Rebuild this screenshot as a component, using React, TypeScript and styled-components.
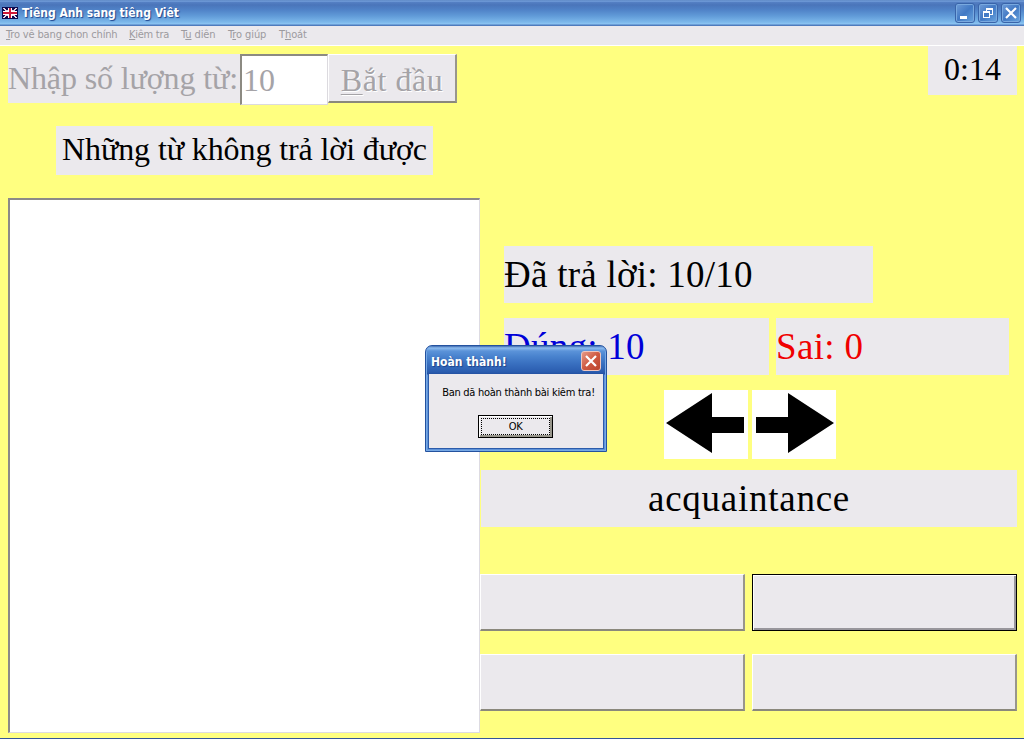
import React from 'react';
import styled, { createGlobalStyle, css } from 'styled-components';

const FACE = '#ebe9ed';
const YELLOW = '#ffff80';
const UI = '"DejaVu Sans Condensed", "Noto Sans", sans-serif';

const Global = createGlobalStyle`
  *, *::before, *::after { box-sizing: border-box; }
  body { margin: 0; overflow: hidden; font-family: "Liberation Serif", serif; }
  button, input { font: inherit; margin: 0; border-radius: 0; outline: none; }
`;

const Window = styled.div`
  position: relative;
  display: flex;
  flex-direction: column;
  width: 1024px;
  height: 739px;
  background: ${YELLOW};
  border-bottom: 1px solid #34559a;
  white-space: nowrap;
`;

const TitleBar = styled.header`
  display: flex;
  align-items: center;
  height: 26px;
  flex: none;
  padding: 0 3px 0 2px;
  background: linear-gradient(#4a74b4 0, #7fabe4 1px, #5580c4 2px, #4a75ba 5px, #5083c8 10px, #619bd8 16px, #7bb7ea 22px, #8cc4f2 24px, #4e7bbd 25px);
  color: #fff;
`;

const Title = styled.h1<{ $spacing: number }>`
  flex: 1;
  margin: 0;
  font: bold 12px/16px ${UI};
  letter-spacing: ${(p) => p.$spacing}px;
  text-shadow: 1px 1px 1px #1d438c;
`;

const Flag = styled.svg`
  width: 16px;
  height: 12px;
  margin-right: 4px;
`;

const WindowButtons = styled.div`
  display: flex;
  gap: 3px;
`;

const WindowButton = styled.button`
  display: grid;
  place-items: center;
  width: 20px;
  height: 20px;
  padding: 0;
  border: 1px solid #3964a9;
  border-radius: 3px;
  background: linear-gradient(135deg, #6f9cd8, #4279c4 50%, #69a5df);
  box-shadow: inset 0 0 0 1px #79a9df;
`;

const MenuBar = styled.nav`
  display: flex;
  flex: none;
  height: 20px;
  padding-left: 6px;
  background: ${FACE};
  border-bottom: 1px solid #fff;
  font: 11px/18px ${UI};
  color: #9c9a9e;
`;

const MenuItem = styled.span<{ $width: number; $spacing: number }>`
  width: ${(p) => p.$width}px;
  letter-spacing: ${(p) => p.$spacing}px;
`;

const Main = styled.main`
  display: flex;
  flex: 1;
`;

const LeftColumn = styled.section`
  width: 480px;
  padding: 8px 0 0 8px;
`;

const CountRow = styled.div`
  display: flex;
  align-items: flex-start;
  font-size: 32px;
  color: #a5a3a7;
`;

const Plate = styled.div<{ $w?: number; $h: number; $line?: number; $size: number; $color?: string; $center?: boolean; $spacing?: number }>`
  width: ${(p) => (p.$w ? `${p.$w}px` : 'auto')};
  height: ${(p) => p.$h}px;
  background: ${FACE};
  color: ${(p) => p.$color || '#000'};
  font-size: ${(p) => p.$size}px;
  line-height: ${(p) => p.$line || p.$h}px;
  letter-spacing: ${(p) => p.$spacing || 0}px;
  text-align: ${(p) => (p.$center ? 'center' : 'left')};
`;

const CountInput = styled.input`
  width: 88px;
  height: 51px;
  padding: 0 1px 0;
  border: solid;
  border-width: 2px 1px 1px 2px;
  border-color: #8c8a82 #dcdadf #dcdadf #8c8a82;
  background: #fff;
  color: #a5a3a7;
`;

const raised = css`
  border: solid;
  border-width: 1px 2px 2px 1px;
  border-color: #fff #98968c #8a887c #fff;
  background: ${FACE};
`;

const StartButton = styled.button`
  ${raised}
  width: 129px;
  height: 49px;
  padding: 4px 0 0;
  line-height: 36px;
  letter-spacing: 0.55px;
  color: #a5a3a7;
  text-shadow: 1px 1px 0 #fff;
  u { text-decoration-thickness: 1px; text-underline-offset: 3px; }
`;

const MissedHeading = styled.div`
  margin: 21px 0 23px 48px;
`;

const MissedList = styled.div`
  height: 535px;
  border: solid;
  border-width: 2px 1px 1px 2px;
  border-color: #8c8a88 #dddbe2 #dddbe2 #8c8a88;
  background: #fff;
`;

const RightColumn = styled.section`
  flex: 1;
  display: flex;
  flex-direction: column;
  padding-right: 7px;
`;

const TimerSlot = styled.div`
  display: flex;
  justify-content: flex-end;
  margin-bottom: 151px;
`;

const Scores = styled.div`
  display: grid;
  grid-template-columns: 265px 233px;
  gap: 15px 7px;
  margin-left: 24px;
`;

const Total = styled.div`
  grid-column: 1 / -1;
`;

const Arrows = styled.div`
  display: flex;
  gap: 4px;
  margin: 15px 0 11px 184px;
`;

const ArrowButton = styled.button`
  width: 84px;
  height: 69px;
  padding: 0;
  border: 0;
  background: #fff;
  svg { display: block; }
`;

const Word = styled.div`
  padding-left: 1px;
`;

const Answers = styled.div`
  display: grid;
  grid-template-columns: 265px 265px;
  gap: 23px 7px;
  margin-top: 47px;
`;

const AnswerButton = styled.button<{ $default?: boolean }>`
  ${raised}
  height: 57px;
  ${(p) =>
    p.$default &&
    css`
      border: 1px solid #000;
      box-shadow: inset 1px 1px #fff, inset -2px -2px #98969c;
    `}
`;

const Dialog = styled.div`
  position: absolute;
  left: 425px;
  top: 345px;
  width: 182px;
  height: 107px;
  padding: 0 2px 2px;
  border: 1px solid #24529f;
  border-radius: 7px 7px 0 0;
  background: linear-gradient(#3c69b0 0, #8dbcef 2px, #5b93d9 5px, #4a84cf 10px, #3a71c1 17px, #2a5caf 26px, #2450a2 28px, #5f93d8 29px);
  box-shadow: inset 1px 0 #77a9e5, inset -1px 0 #77a9e5, inset 0 -1px #77a9e5;
`;

const DialogTitle = styled.div`
  display: flex;
  align-items: center;
  height: 28px;
  padding: 2px 3px 0 3px;
  color: #fff;
  h2 { padding-top: 2px; }
`;

const CloseButton = styled.button`
  display: grid;
  place-items: center;
  width: 20px;
  height: 20px;
  padding: 0;
  border: 1px solid #f0c6bd;
  border-radius: 3px;
  background: linear-gradient(135deg, #e69a87, #cf5a42 50%, #bb452d);
`;

const DialogBody = styled.div`
  display: flex;
  flex-direction: column;
  align-items: center;
  height: 75px;
  padding-top: 11px;
  background: ${FACE};
  border: 1px solid #2c5cab;
  border-top: 0;
  font: 11px/16px ${UI};
`;

const Message = styled.div`
  margin-left: 5px;
  letter-spacing: -0.27px;
`;

const OkButton = styled.button`
  width: 75px;
  height: 23px;
  margin: 14px 1px 0 0;
  padding: 2px;
  border: 1px solid #000;
  background: ${FACE};
  box-shadow: inset 1px 1px #fff, inset -2px -2px #98968c;
  line-height: 15px;
  letter-spacing: -0.4px;
  span { display: block; height: 17px; border: 1px dotted #000; }
`;

const Cross = ({ size }: { size: number }) => (
  <svg width={size} height={size} viewBox="0 0 12 12">
    <path d="M1 1 11 11M11 1 1 11" stroke="#fff" strokeWidth="2.2" />
  </svg>
);

export default function App() {
  return (
    <>
      <Global />
      <Window>
        <TitleBar>
          <Flag viewBox="0 0 16 12" shapeRendering="crispEdges">
            <path fill="#0b0b50" d="M0 0h16v12H0z" />
            <path d="M1 1 15 11M15 1 1 11" stroke="#f0d8e4" strokeWidth="1.5" />
            <path d="M8 1v10M1 6h14" stroke="#fff" strokeWidth="4" />
            <path d="M8 1v10M1 6h14" stroke="#d01838" strokeWidth="2" />
            <path d="M.5 .5h15v11H.5z" fill="none" stroke="#0b0b50" />
          </Flag>
          <Title $spacing={-0.03}>Tiêng Anh sang tiêng Viêt</Title>
          <WindowButtons>
            <WindowButton aria-label="Minimize">
              <svg width="18" height="18"><path d="M4 12h7v3H4z" fill="#fff" /></svg>
            </WindowButton>
            <WindowButton aria-label="Restore">
              <svg width="18" height="18" fill="none" stroke="#fff" shapeRendering="crispEdges">
                <path d="M7.5 7V4.5h6v6H11M7 5.5h7M4.5 8.500h6v5h-6zM4 7.500h7" />
              </svg>
            </WindowButton>
            <WindowButton aria-label="Close"><Cross size={12} /></WindowButton>
          </WindowButtons>
        </TitleBar>
        <MenuBar>
          <MenuItem $width={123} $spacing={-0.15}><u>T</u>ro vê bang chon chính</MenuItem>
          <MenuItem $width={52} $spacing={-0.25}><u>K</u>iêm tra</MenuItem>
          <MenuItem $width={47} $spacing={-0.1}>T<u>u</u> diên</MenuItem>
          <MenuItem $width={51} $spacing={-0.1}>T<u>r</u>o giúp</MenuItem>
          <MenuItem $width={40} $spacing={-0.1}>T<u>h</u>oát</MenuItem>
        </MenuBar>
        <Main>
          <LeftColumn>
            <CountRow>
              <Plate $w={232} $h={49} $line={48} $size={32} $color="#a5a3a7" $spacing={-0.12}>Nhập số lượng từ:</Plate>
              <CountInput defaultValue="10" />
              <StartButton><u>B</u>ắt đầu</StartButton>
            </CountRow>
            <MissedHeading>
              <Plate $w={377} $h={49} $line={47} $size={32} $center $spacing={-0.1}>Những từ không trả lời được</Plate>
            </MissedHeading>
            <MissedList />
          </LeftColumn>
          <RightColumn>
            <TimerSlot><Plate $w={89} $h={49} $line={47} $size={32} $center>0:14</Plate></TimerSlot>
            <Scores>
              <Total><Plate $w={369} $h={57} $size={37} $spacing={0.25}>Đã trả lời: 10/10</Plate></Total>
              <Plate $h={57} $size={37} $color="#0000d8" $spacing={0.25}>Đúng: 10</Plate>
              <Plate $h={57} $size={37} $color="#f00000" $spacing={0.35}>Sai: 0</Plate>
            </Scores>
            <Arrows>
              <ArrowButton aria-label="Previous">
                <svg width="84" height="69"><path d="M2 33 48 3V27H80V43H48V63Z" /></svg>
              </ArrowButton>
              <ArrowButton aria-label="Next">
                <svg width="84" height="69"><path d="M82 33 36 3V27H4V43H36V63Z" /></svg>
              </ArrowButton>
            </Arrows>
            <Word><Plate $h={57} $size={37} $center $spacing={0.75}>acquaintance</Plate></Word>
            <Answers>
              <AnswerButton />
              <AnswerButton $default />
              <AnswerButton />
              <AnswerButton />
            </Answers>
          </RightColumn>
        </Main>
        <Dialog>
          <DialogTitle>
            <Title as="h2" $spacing={0}>Hoàn thành!</Title>
            <CloseButton aria-label="Close"><Cross size={12} /></CloseButton>
          </DialogTitle>
          <DialogBody>
            <Message>Ban dã hoàn thành bài kiêm tra!</Message>
            <OkButton><span>OK</span></OkButton>
          </DialogBody>
        </Dialog>
      </Window>
    </>
  );
}
